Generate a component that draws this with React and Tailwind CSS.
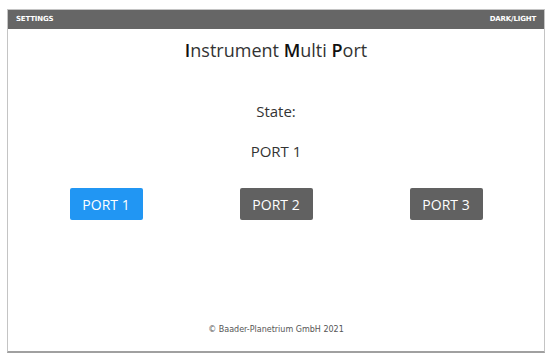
import React, { useState } from 'react';

const ports = ['PORT 1', 'PORT 2', 'PORT 3'];

export default function App() {
  const [active, setActive] = useState(0);

  return (
    <div className="w-[550px] h-[359px] bg-white pt-[9px] pl-[7px]">
      <div className="w-[538px] h-[344px] border border-[#c4c4c4] border-b-2 border-b-[#a0a0a0] flex flex-col">
        {/* Top bar */}
        <div className="h-[19px] bg-[#666666] flex items-center justify-between px-[8px] text-white font-bold text-[7px] tracking-tight" style={{ fontFamily: '"DejaVu Sans", Verdana, sans-serif' }}>
          <span>SETTINGS</span>
          <span>DARK/LIGHT</span>
        </div>

        <div className="flex-1 flex flex-col items-center" style={{ fontFamily: '"Open Sans", "Noto Sans", sans-serif' }}>
          <h1 className="mt-[8px] text-[18px] leading-[26px] text-[#333]">
            <b className="text-[#111] font-semibold">I</b>nstrument <b className="text-[#111] font-semibold">M</b>ulti <b className="text-[#111] font-semibold">P</b>ort
          </h1>

          <p className="mt-[38px] text-[15px] leading-[20px] text-[#333]">State:</p>
          <p className="mt-[20px] text-[15px] leading-[20px] text-[#333]">{ports[active]}</p>

          <div className="mt-[27px] w-full grid grid-cols-3 px-[13px]">
            {ports.map((p, i) => (
              <div key={p} className="flex justify-center">
                <button
                  onClick={() => setActive(i)}
                  className={`w-[73px] h-[32px] rounded-[2px] text-white text-[14px] ${i === active ? 'bg-[#2196f3]' : 'bg-[#616161]'}`}
                >
                  {p}
                </button>
              </div>
            ))}
          </div>

          <div className="flex-1" />
          <p className="mb-[15px] text-[8px] text-[#555]" style={{ fontFamily: '"DejaVu Sans", Verdana, sans-serif' }}>
            © Baader-Planetrium GmbH 2021
          </p>
        </div>
      </div>
    </div>
  );
}
